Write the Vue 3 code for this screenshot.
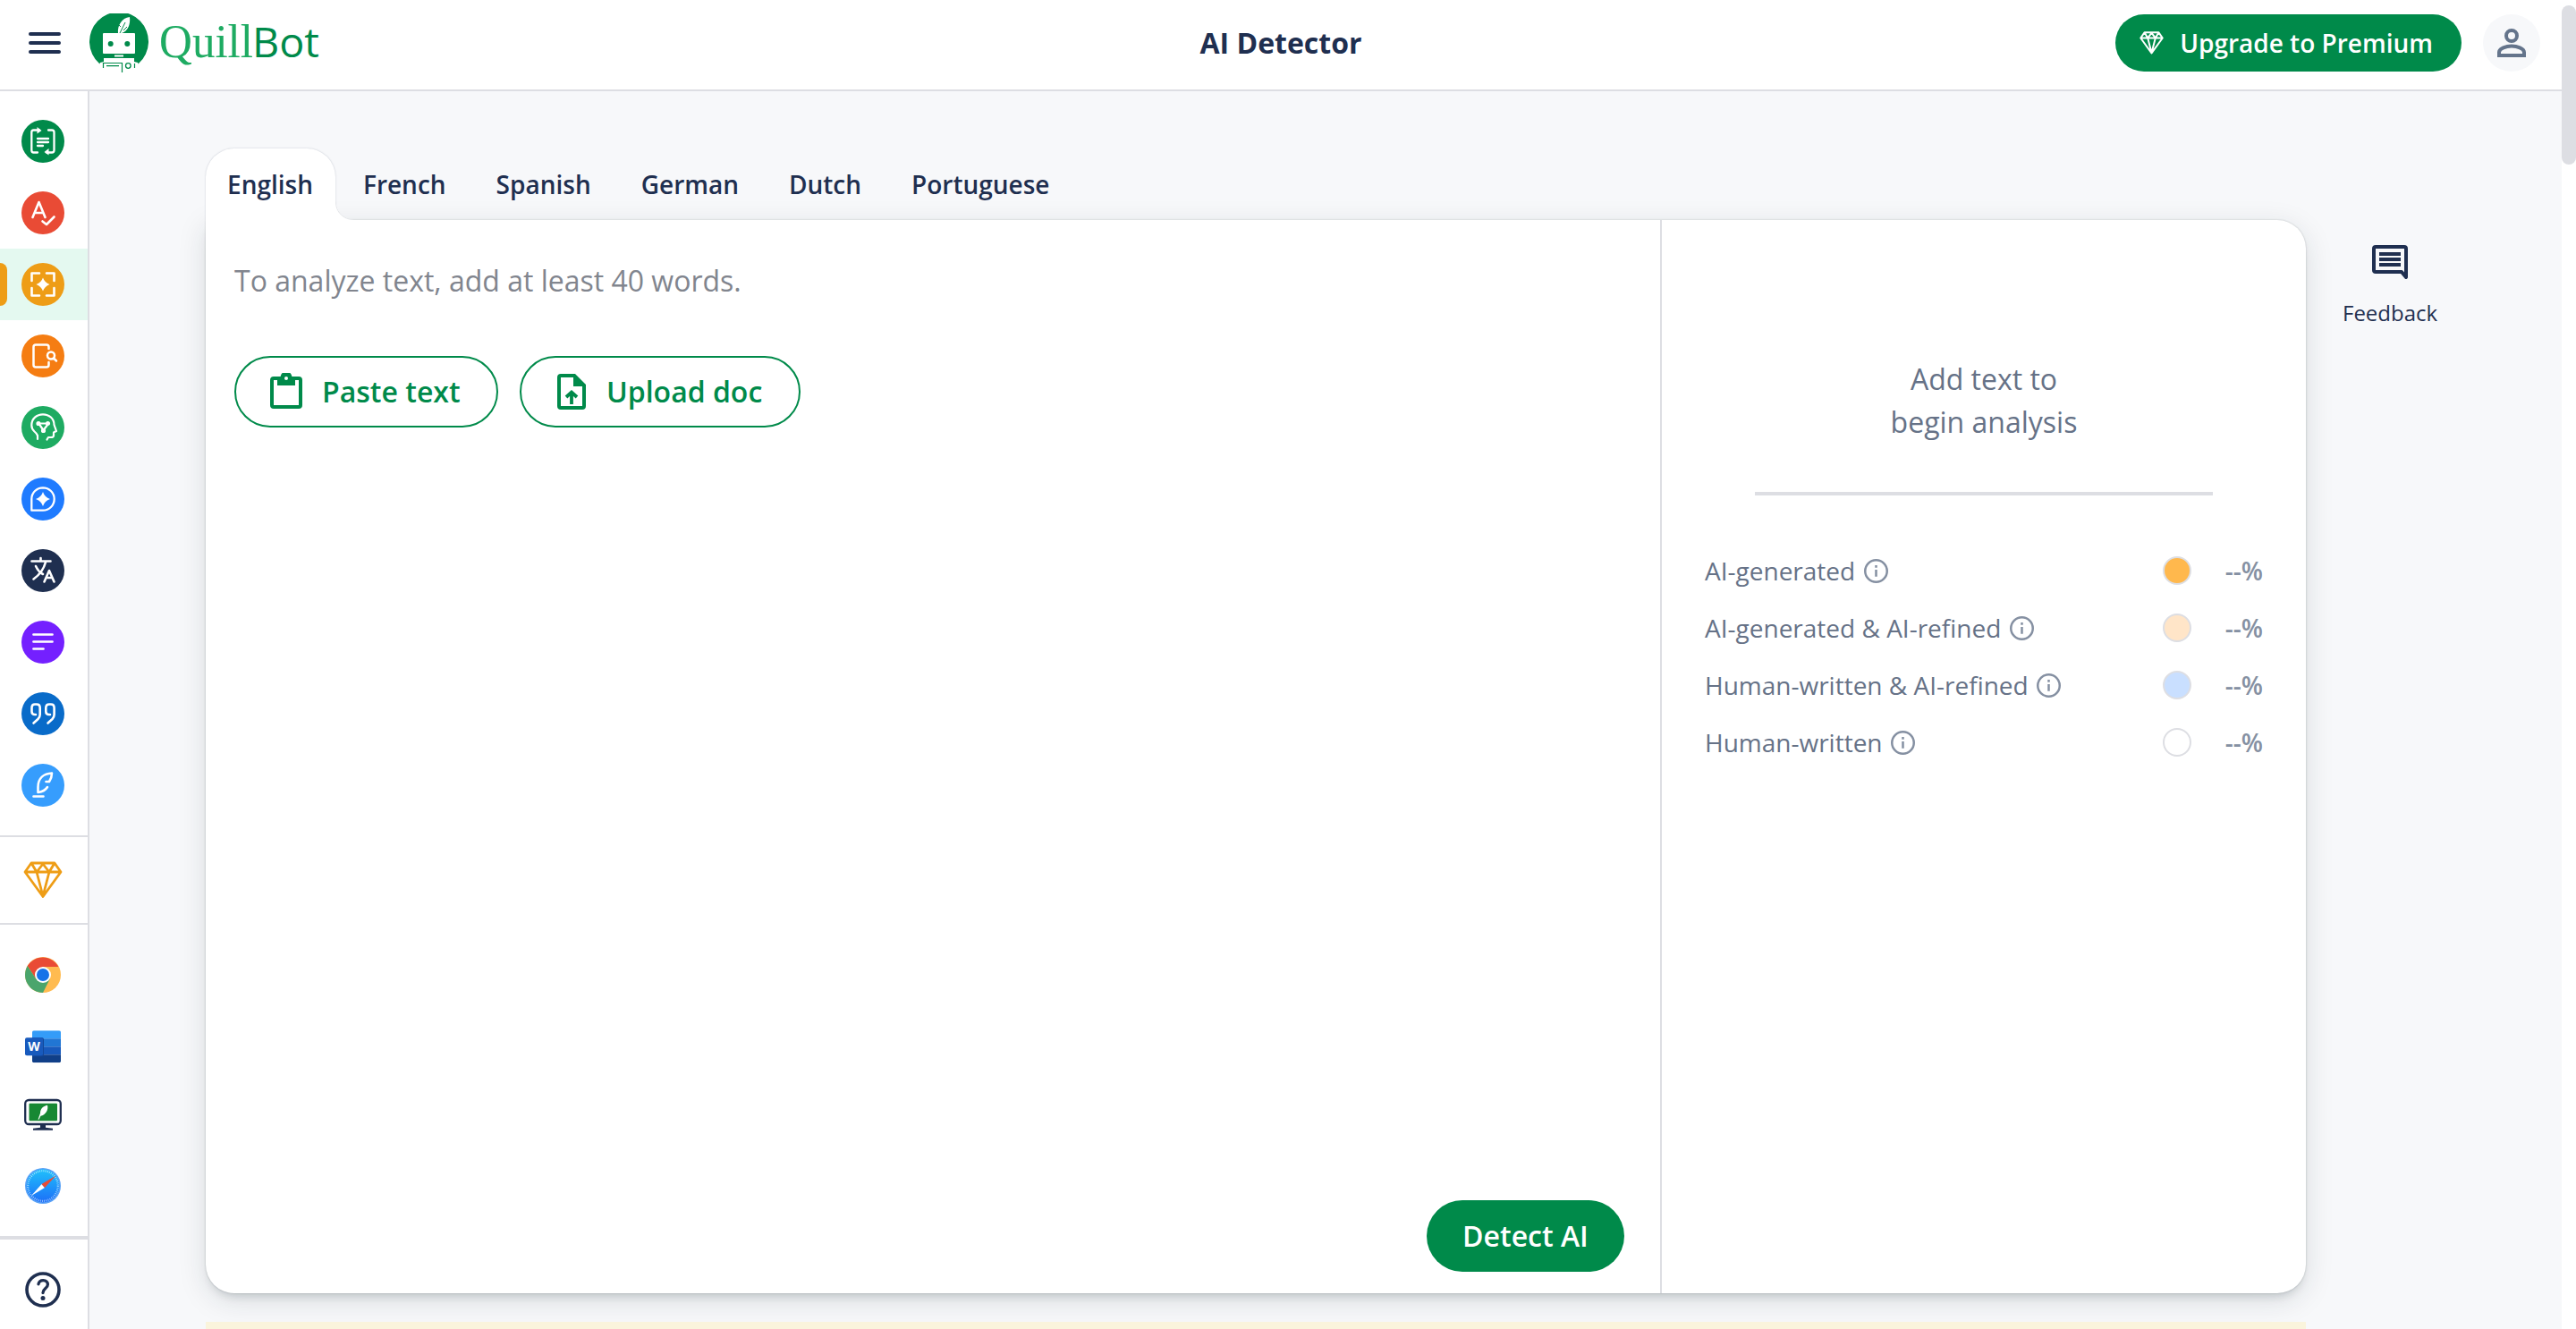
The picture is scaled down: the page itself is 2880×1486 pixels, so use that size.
<template>
  <div class="app">
    <header class="header">
      <div class="header__left">
        <button class="menu" aria-label="Menu"><i></i><i></i><i></i></button>
        <div class="logo">
          <svg class="logo__mark" viewBox="0 0 66 66">
            <path d="M11 56A33 33 0 1 1 55 56L51 61H15Z" fill="#008a4a" />
            <path d="M32 22C31 14 36 5 45 4C46 12 43 20 36 22Z" fill="#fff" />
            <path d="M34 22L40 10M35 15L33 13M38 19L42 15" stroke="#008a4a" stroke-width="1" fill="none" />
            <rect x="15" y="22" width="36" height="23" rx="1" fill="#fff" />
            <circle cx="23.7" cy="34" r="3" fill="#008a4a" />
            <circle cx="42.3" cy="34" r="3" fill="#008a4a" />
            <path d="M28 46.500H38V48.500H28Z" fill="#fff" />
            <path d="M16 50H50V54L54 55L57 61H51V66H15V61H9L12 55L16 54Z" fill="#fff" />
            <path d="M15.500 61V55.500H36.500V66M19 58.700H33" fill="none" stroke="#008a4a" stroke-width="1.200" />
            <circle cx="43.300" cy="58.500" r="2.800" fill="none" stroke="#008a4a" stroke-width="1.300" />
            <path d="M50.500 56V61" stroke="#008a4a" stroke-width="1.200" />
          </svg>
          <svg class="logo__text" viewBox="0 0 182 64" role="img">
            <text class="logo__quill" x="0" y="47.500" textLength="105" lengthAdjust="spacingAndGlyphs">Quill</text>
            <text class="logo__bot" x="104" y="47.500" textLength="75" lengthAdjust="spacingAndGlyphs">Bot</text>
          </svg>
        </div>
      </div>
      <h1 class="header__title">AI Detector</h1>
      <div class="header__right">
        <button class="upgrade">
          <svg class="upgrade__icon" viewBox="0 0 44 42"><path :d="diamond" /></svg>
          <span>Upgrade to Premium</span>
        </button>
        <div class="avatar">
          <svg viewBox="0 0 32 32" fill="none" stroke="#64748b" stroke-width="4">
            <circle cx="16" cy="8" r="6" />
            <path d="M2 30V26.500C2 22 10 19.500 16 19.500S30 22 30 26.500V30Z" />
          </svg>
        </div>
      </div>
    </header>

    <div class="body">
      <aside class="sidebar">
        <nav class="tools">
          <a v-for="tool in tools" :key="tool.name" class="tool" :class="{ 'tool--active': tool.active }">
            <svg class="tool__icon" viewBox="0 0 48 48">
              <circle cx="24" cy="24" r="24" :fill="tool.color" />
              <path v-if="tool.stroke" class="tool__stroke" :d="tool.stroke" :stroke-width="tool.width || 2.6" />
              <path v-if="tool.fill" :d="tool.fill" fill="#fff" />
            </svg>
          </a>
        </nav>
        <div class="premium">
          <svg viewBox="0 0 44 42"><path :d="diamond" /></svg>
        </div>
        <div class="apps">
          <!-- Chrome -->
          <svg class="apps__item" viewBox="0 0 40 40">
            <circle cx="20" cy="20" r="20" fill="#ffbb50" />
            <path d="M20 11H37.300A20 20 0 0 0 2.700 10L12.200 24.500Z" fill="#e94b35" />
            <path d="M2.700 10A20 20 0 0 0 20 40L27.800 24.500L12.200 24.500Z" fill="#4aa56c" />
            <circle cx="20" cy="20" r="9" fill="#fff" />
            <circle cx="20" cy="20" r="7" fill="#1673e8" />
          </svg>
          <!-- Word -->
          <svg class="apps__item" viewBox="0 -1.3 40 40">
            <defs>
              <clipPath id="wordClip"><rect x="8" y="2" width="32" height="36" rx="2" /></clipPath>
            </defs>
            <g clip-path="url(#wordClip)">
              <path d="M8 2H40V11H8Z" fill="#349cf8" />
              <path d="M8 11H40V20H8Z" fill="#2176d4" />
              <path d="M8 20H40V29H8Z" fill="#185abd" />
              <path d="M8 29H40V38H8Z" fill="#103f88" />
              <path d="M8 10H19Q21 10 21 12V29Q21 31 19 31H8Z" fill="#12479a" />
            </g>
            <rect y="10" width="20" height="20" rx="2" fill="#185abd" />
            <text x="10" y="25" class="apps__w">W</text>
          </svg>
          <!-- Desktop app -->
          <svg class="apps__item apps__item--wide" viewBox="0 1.2 42 40">
            <rect x="1.200" y="4.200" width="39.600" height="27" rx="4" fill="#fff" stroke="#1f2f50" stroke-width="2.300" />
            <rect x="5.500" y="8" width="31.500" height="19.500" rx="1" fill="#178833" />
            <path d="M15.500 26L18 19C18 14 21 11 26 10C27.500 15 24 21 18.500 22L16.500 26Z" fill="#fff" />
            <path d="M18 32H24V35L32 36V38H10V36L18 35Z" fill="#1f2f50" />
          </svg>
          <!-- Safari -->
          <svg class="apps__item" viewBox="0 0 40 40">
            <defs>
              <linearGradient id="safari" x1="0" y1="0" x2="0" y2="1">
                <stop offset="0" stop-color="#1fc0fb" />
                <stop offset="1" stop-color="#1d6ff8" />
              </linearGradient>
            </defs>
            <circle cx="20" cy="20" r="20" fill="#5aa2f6" />
            <circle cx="20" cy="20" r="18.500" fill="url(#safari)" />
            <circle cx="20" cy="20" r="16.800" fill="none" stroke="#fff" stroke-width="2.200" stroke-dasharray=".8 1.400" opacity=".65" />
            <path d="M7 31L18.500 18L22 22Z" fill="#fff" />
            <path d="M34.500 8.500L18.500 18L22 22Z" fill="#e94b35" />
          </svg>
        </div>
        <div class="help">
          <svg viewBox="0 0 40 40" fill="none" stroke="#1f2f50">
            <circle cx="20" cy="20" r="18" stroke-width="3.600" />
            <path d="M15 13.800C15.500 11 17.500 9.600 20.300 9.600C23.500 9.600 25.400 11.500 25.400 14.200C25.400 18.500 20 18.500 20 23.500" stroke-width="3.300" stroke-linecap="round" />
            <circle cx="20" cy="29.500" r="2.500" fill="#1f2f50" stroke="none" />
          </svg>
        </div>
      </aside>

      <main class="main">
        <div class="workspace">
          <div class="tabs">
            <button
              v-for="lang in languages"
              :key="lang"
              class="tab"
              :class="{ 'tab--active': lang === activeLang }"
              @click="activeLang = lang"
            >
              {{ lang }}
            </button>
          </div>

          <div class="card">
            <section class="editor">
              <p class="editor__hint">To analyze text, add at least 40 words.</p>
              <div class="editor__actions">
                <button class="outline-btn outline-btn--paste">
                  <svg viewBox="0 0 36 40">
                    <path fill-rule="evenodd" d="M32 4H24.400A6.500 6.500 0 0 0 11.600 4H4Q0 4 0 8V36Q0 40 4 40H32Q36 40 36 36V8Q36 4 32 4ZM18 4A2 2 0 1 1 18 8A2 2 0 1 1 18 4ZM4 8H8V14H28V8H32V36H4Z" />
                  </svg>
                  <span>Paste text</span>
                </button>
                <button class="outline-btn outline-btn--upload">
                  <svg viewBox="0 0 32 40">
                    <path fill-rule="evenodd" d="M4 0H20L32 12V36Q32 40 28 40H4Q0 40 0 36V4Q0 0 4 0ZM4 4V36H28V14H18V4Z" />
                    <path d="M16 34V22M10 26L16 20.500L22 26" fill="none" stroke="#008a4a" stroke-width="3.800" />
                  </svg>
                  <span>Upload doc</span>
                </button>
              </div>
              <button class="detect">Detect AI</button>
            </section>

            <section class="results">
              <p class="results__empty">Add text to<br />begin analysis</p>
              <div class="results__line"></div>
              <ul class="legend">
                <li v-for="item in legend" :key="item.label" class="legend__row">
                  <span class="legend__label">{{ item.label }}</span>
                  <svg class="legend__info" viewBox="0 0 26 26">
                    <circle cx="13" cy="13" r="11.800" />
                    <path d="M13 11.500V19M13 6.800V9.400" />
                  </svg>
                  <i class="legend__dot" :class="`legend__dot--${item.type}`"></i>
                  <span class="legend__value">--%</span>
                </li>
              </ul>
            </section>
          </div>
          <div class="banner"></div>
        </div>

        <div class="feedback">
          <svg viewBox="0 0 40 40" fill="none" stroke="#1f2f50" stroke-width="4">
            <path d="M38 36V4Q38 2 36 2H4Q2 2 2 4V28Q2 30 4 30H33Z" stroke-linejoin="round" />
            <path d="M8 10H32M8 16H32M8 22H32" />
          </svg>
          <span>Feedback</span>
        </div>
      </main>
    </div>

    <div class="scrollbar"><i class="scrollbar__thumb"></i></div>
  </div>
</template>

<script setup>
import { ref } from 'vue'

const languages = ['English', 'French', 'Spanish', 'German', 'Dutch', 'Portuguese']
const activeLang = ref('English')

const legend = [
  { label: 'AI-generated', type: 'ai' },
  { label: 'AI-generated & AI-refined', type: 'ai-refined' },
  { label: 'Human-written & AI-refined', type: 'human-refined' },
  { label: 'Human-written', type: 'human' },
]

// shared by the sidebar and the upgrade button
const diamond = 'M9 2H35L42 12L22 39.500L2 12ZM2 12H42M9 2L15 12L22 3L29 12L35 2M15 12L22 39L29 12'

const tools = [
  {
    name: 'paraphraser',
    color: '#008a4a',
    stroke: 'M20 11.500H13.500Q11.300 11.500 11.300 14V34Q11.300 36.500 13.500 36.500H18M30 11.500H34Q36.500 11.500 36.500 14V34Q36.500 36.500 34 36.500H28M18 21H30M18 25H30M18 29H24',
    fill: 'M17.500 8L22.500 12L17.500 15.500ZM30.500 32L25.500 36L30.500 39.500Z',
    width: 2.3,
  },
  {
    name: 'grammar',
    color: '#e94b35',
    stroke: 'M12.500 29L19.500 12L26.500 29M15 24H24M23.500 33.500L28 37L36.500 28.500',
  },
  {
    name: 'detector',
    color: '#ee9d16',
    active: true,
    stroke: 'M20 11.500H11.500V20M28 11.500H36.500V20M20 36.500H11.500V28M28 36.500H36.500V28',
    fill: 'M24 16.500Q26 22 31.500 24Q26 26 24 31.500Q22 26 16.500 24Q22 22 24 16.500Z',
  },
  {
    name: 'plagiarism',
    color: '#f57d12',
    stroke: 'M30.500 16V14Q30.500 11.500 28 11.500H16Q13.500 11.500 13.500 14V34Q13.500 36.500 16 36.500H28Q30.500 36.500 30.500 34V31M37 23.500A4 4 0 1 1 29 23.500A4 4 0 1 1 37 23.500M36 26.500L39 29.500',
    width: 2.5,
  },
  {
    name: 'humanizer',
    color: '#1eab62',
    stroke: 'M18 37V33Q17 30.500 14.500 28.500Q11.300 25.500 11.300 21.500C11.300 14 17 9.300 24 9.300C31 9.300 36.500 14 36.500 21L39 28L36 29.500V33Q36 35 33 35H30L28.500 37.500M19.500 19.500H29M20 20.500L24.500 27L29.500 20.500M20.500 19.500A1.500 1.500 0 1 1 17.500 19.500A1.500 1.500 0 1 1 20.500 19.500M31 19.500A1.500 1.500 0 1 1 28 19.500A1.500 1.500 0 1 1 31 19.500M26 27.500A1.500 1.500 0 1 1 23 27.500A1.500 1.500 0 1 1 26 27.500',
    width: 2.2,
  },
  {
    name: 'chat',
    color: '#1f7bff',
    stroke: 'M24 11.300A12.700 12.700 0 0 1 24 36.700H11.300V24A12.700 12.700 0 0 1 24 11.300Z',
    fill: 'M24 16Q26 22 32 24Q26 26 24 32Q22 26 16 24Q22 22 24 16Z',
    width: 2.3,
  },
  {
    name: 'translator',
    color: '#1f2f50',
    stroke: 'M11.500 13.500H32.500M21.500 10V13M13.500 33.500Q24 26 27 14.500M16 19Q19 25.500 24 28M25.500 36.500L31 24L36.500 36.500M28 32H34',
  },
  {
    name: 'summarizer',
    color: '#7420ff',
    stroke: 'M13.500 15.500H34.500M13.500 23.500H34.500M13.500 31.500H24.500',
    width: 2.7,
  },
  {
    name: 'citation',
    color: '#096bc9',
    stroke: 'M16 25H15Q11.500 25 11.500 21.500V17.500Q11.500 13.500 15 13.500H17Q20.700 13.500 20.700 17.500V25Q20.700 28 18.500 30L13.500 34.500M32 25H31Q27.300 25 27.300 21.500V17.500Q27.300 13.500 31 13.500H33Q36.600 13.500 36.600 17.500V25Q36.600 28 34.500 30L29.500 34.500',
    width: 2.6,
  },
  {
    name: 'flow',
    color: '#369dfd',
    stroke: 'M13.500 36.500H24.500M18.500 32V26C18.500 16 25 11 34 10.500C34 14 33 17 31 20H27.500M29 26Q26 31 18.500 32',
    width: 2.6,
  },
]
</script>

<style>
body {
  background: #f7f8fa;
  overflow: hidden;
}
</style>

<style scoped>
.app {
  position: relative;
  width: 100%;
  height: 1486px;
  overflow: hidden;
  background: #f7f8fa;
  color: #1f2f50;
  font-family: 'Open Sans', sans-serif;
}

button {
  border: none;
  background: none;
  padding: 0;
  color: inherit;
  font: inherit;
  cursor: pointer;
}

svg {
  display: block;
  flex: none;
}

/* header */
.header {
  box-sizing: border-box;
  display: grid;
  grid-template-columns: 1fr auto 1fr;
  align-items: center;
  height: 102px;
  padding: 0 40px 4px 32px;
  margin-right: 16px;
  background: #fff;
  border-bottom: 2px solid #dddee3;
}

.header__left,
.header__right {
  display: flex;
  align-items: center;
}

.header__right {
  justify-content: flex-end;
  gap: 24px;
  margin-right: -16px;
}

.header__title {
  margin: 0 0 0 8px;
  font-size: 32px;
  font-weight: 700;
  line-height: 48px;
}

.menu {
  display: flex;
  flex-direction: column;
  gap: 6px;
  width: 36px;
  margin-right: 32px;
}

.menu i {
  height: 4px;
  border-radius: 2px;
  background: #1f2f50;
}

.logo {
  display: flex;
  align-items: center;
}

.logo__mark {
  width: 66px;
  height: 66px;
}

.logo__text {
  width: 182px;
  height: 64px;
  margin-left: 12px;
  overflow: visible;
}

.logo__quill {
  font-family: 'Liberation Serif', serif;
  font-size: 52px;
  fill: #1eab62;
}

.logo__bot {
  font-family: 'Open Sans', sans-serif;
  font-size: 46px;
  font-weight: 400;
  fill: #008a4a;
}

.upgrade {
  display: flex;
  align-items: center;
  gap: 18px;
  height: 64px;
  padding: 0 32px 0 27px;
  border-radius: 32px;
  background: #008a4a;
  color: #fff;
  font-size: 28px;
  font-weight: 600;
}

.upgrade__icon {
  width: 27px;
  height: 26px;
  fill: none;
  stroke: #fff;
  stroke-width: 3.2;
  stroke-linejoin: round;
}

.avatar {
  display: flex;
  align-items: center;
  justify-content: center;
  width: 64px;
  height: 64px;
  border-radius: 50%;
  background: #f7f8fa;
}

.avatar svg {
  width: 32px;
  height: 32px;
}

/* sidebar */
.body {
  display: flex;
  height: 1384px;
}

.sidebar {
  display: flex;
  flex-direction: column;
  width: 98px;
  background: #fff;
  border-right: 2px solid #dddee3;
}

.tools {
  box-sizing: border-box;
  height: 834px;
  padding-top: 16px;
  border-bottom: 2px solid #dddee3;
}

.tool {
  position: relative;
  display: flex;
  align-items: center;
  height: 80px;
  padding-left: 24px;
}

.tool--active {
  background: #e4f9f0;
}

.tool--active::before {
  content: '';
  position: absolute;
  left: 0;
  top: 16px;
  width: 8px;
  height: 48px;
  border-radius: 0 8px 8px 0;
  background: #ee9d16;
}

.tool__icon {
  width: 48px;
  height: 48px;
}

.tool__stroke {
  fill: none;
  stroke: #fff;
  stroke-linecap: round;
  stroke-linejoin: round;
}

.premium {
  box-sizing: border-box;
  height: 98px;
  padding: 27px 0 0 26px;
  border-bottom: 2px solid #dddee3;
}

.premium svg {
  width: 44px;
  height: 42px;
  fill: none;
  stroke: #ee9d16;
  stroke-width: 2.8;
  stroke-linejoin: round;
}

.apps {
  box-sizing: border-box;
  display: flex;
  flex-direction: column;
  align-items: center;
  gap: 38.7px;
  height: 352px;
  padding: 36px 2px 0 0;
  border-bottom: 4px solid #dddee3;
}

.apps__item {
  width: 40px;
  height: 40px;
}

.apps__item--wide {
  width: 42px;
}

.apps__w {
  fill: #fff;
  font-size: 14px;
  font-weight: 700;
  text-anchor: middle;
}

.help {
  padding: 36px 0 0 28px;
}

.help svg {
  width: 40px;
  height: 40px;
}

/* workspace */
.main {
  display: flex;
  flex: 1;
  align-items: flex-start;
  padding: 64px 0 0 130px;
}

.workspace {
  width: 2348px;
}

.tabs {
  position: relative;
  z-index: 1;
  display: flex;
  height: 80px;
}

.tab {
  position: relative;
  padding: 0 24px;
  margin-right: 8px;
  font-size: 28px;
  font-weight: 600;
}

.tab--active {
  padding-right: 25px;
  margin-right: 7px;
  background: #fff;
  border-radius: 32px 32px 0 0;
  box-shadow: 0 0 2px rgba(31, 47, 80, 0.25);
  clip-path: inset(-4px -24px 0 -4px);
}

.tab--active::after {
  content: '';
  position: absolute;
  right: -20px;
  bottom: 0;
  width: 20px;
  height: 20px;
  background: radial-gradient(circle at 100% 0, transparent 19px, #e4e6e9 19.5px, #fff 20.5px);
}

.card {
  display: flex;
  height: 1200px;
  border-radius: 0 32px 32px 32px;
  background: #fff;
  box-shadow: 0 0 2px rgba(20, 30, 40, 0.25), 0 8px 32px rgba(20, 40, 50, 0.13), 0 8px 10px -4px rgba(20, 40, 50, 0.14);
}

.editor {
  box-sizing: border-box;
  display: flex;
  flex-direction: column;
  width: 1628px;
  padding: 44px 40px 24px 32px;
  border-right: 2px solid #dddee3;
}

.editor__hint {
  margin: 0;
  font-size: 32px;
  line-height: 48px;
  color: #81858e;
}

.editor__actions {
  display: flex;
  gap: 24px;
  margin-top: 60px;
}

.outline-btn {
  box-sizing: border-box;
  display: flex;
  align-items: center;
  height: 80px;
  border: 2px solid #008a4a;
  border-radius: 40px;
  color: #008a4a;
  font-size: 32px;
  font-weight: 600;
}

.outline-btn span {
  padding-bottom: 2px;
}

.outline-btn svg {
  fill: #008a4a;
  height: 40px;
}

.outline-btn--paste {
  width: 295px;
  padding-left: 38px;
  gap: 22px;
}

.outline-btn--paste svg {
  width: 36px;
  margin-top: -3px;
}

.outline-btn--upload {
  width: 314px;
  padding-left: 40px;
  gap: 23px;
}

.outline-btn--upload svg {
  width: 32px;
}

.detect {
  align-self: flex-end;
  margin-top: auto;
  width: 221px;
  height: 80px;
  padding-bottom: 2px;
  border-radius: 40px;
  background: #008a4a;
  color: #fff;
  font-size: 32px;
  font-weight: 600;
}

.results {
  flex: 1;
  padding: 154px 48px 0;
}

.results__empty {
  margin: 0;
  text-align: center;
  font-size: 32px;
  line-height: 48px;
  color: #667287;
}

.results__line {
  width: 512px;
  height: 4px;
  margin: 54px auto 52px;
  background: #dddee3;
}

.legend {
  list-style: none;
  margin: 0;
  padding: 0;
}

.legend__row {
  display: flex;
  align-items: center;
  height: 64px;
  font-size: 28px;
  color: #667287;
}

.legend__info {
  width: 27px;
  height: 27px;
  margin-left: 9.5px;
  fill: none;
  stroke: #8590a2;
  stroke-width: 2.4;
}

.legend__dot {
  box-sizing: border-box;
  width: 32px;
  height: 32px;
  margin-left: auto;
  border: 2px solid #dddee3;
  border-radius: 50%;
}

.legend__dot--ai { background: #ffb84d; }
.legend__dot--ai-refined { background: #ffe5c8; }
.legend__dot--human-refined { background: #c9dfff; }
.legend__dot--human { background: #fff; }

.legend__value {
  width: 80px;
  text-align: right;
  font-weight: 600;
  color: #8590a2;
}

.banner {
  height: 8px;
  margin-top: 32px;
  background: #faf4dc;
}

/* feedback */
.feedback {
  display: flex;
  flex-direction: column;
  align-items: center;
  gap: 18px;
  margin: 108px 0 0 41px;
  font-size: 24px;
  line-height: 36px;
}

.feedback svg {
  width: 40px;
  height: 40px;
}

.scrollbar {
  position: absolute;
  top: 0;
  right: 0;
  width: 16px;
  height: 100%;
  background: #fff;
}

.scrollbar__thumb {
  display: block;
  height: 178px;
  margin-top: 6px;
  border-radius: 8px;
  background: #dddee3;
}
</style>
